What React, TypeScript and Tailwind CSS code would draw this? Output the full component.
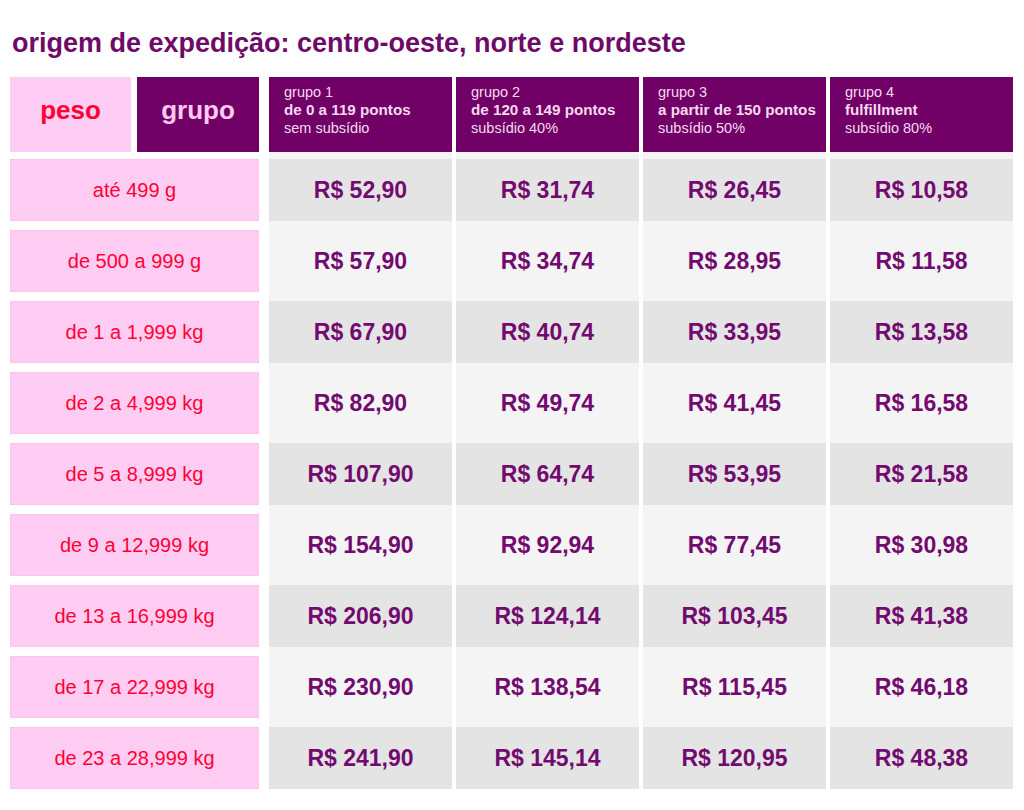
import React from "react";

const weights = [
  "até 499 g",
  "de 500 a 999 g",
  "de 1 a 1,999 kg",
  "de 2 a 4,999 kg",
  "de 5 a 8,999 kg",
  "de 9 a 12,999 kg",
  "de 13 a 16,999 kg",
  "de 17 a 22,999 kg",
  "de 23 a 28,999 kg",
];

const groups = [
  {
    title: "grupo 1",
    range: "de 0 a 119 pontos",
    sub: "sem subsídio",
    prices: ["52,90", "57,90", "67,90", "82,90", "107,90", "154,90", "206,90", "230,90", "241,90"],
  },
  {
    title: "grupo 2",
    range: "de 120 a 149 pontos",
    sub: "subsídio 40%",
    prices: ["31,74", "34,74", "40,74", "49,74", "64,74", "92,94", "124,14", "138,54", "145,14"],
  },
  {
    title: "grupo 3",
    range: "a partir de 150 pontos",
    sub: "subsídio 50%",
    prices: ["26,45", "28,95", "33,95", "41,45", "53,95", "77,45", "103,45", "115,45", "120,95"],
  },
  {
    title: "grupo 4",
    range: "fulfillment",
    sub: "subsídio 80%",
    prices: ["10,58", "11,58", "13,58", "16,58", "21,58", "30,98", "41,38", "46,18", "48,38"],
  },
];

export default function App() {
  return (
    <div
      className="w-[1024px] h-[810px] bg-white pt-[28px] pl-[10px]"
      style={{ fontFamily: '"Liberation Sans", Arial, Helvetica, sans-serif' }}
    >
      <h1 className="pl-[2px] text-[27px] leading-[31px] font-bold text-[#6e0a68]">
        origem de expedição: centro-oeste, norte e nordeste
      </h1>
      <div className="mt-[18px] flex">
        {/* left column */}
        <div className="w-[249px] flex flex-col">
          <div className="flex h-[75px] gap-[6px]">
            <div className="w-[121px] bg-[#ffcdf3] flex items-center justify-center pb-[9px] text-[26px] font-bold text-[#ff0033]">
              peso
            </div>
            <div className="w-[122px] bg-[#700066] flex items-center justify-center pb-[9px] text-[26px] font-bold text-[#ffc9f0]">
              grupo
            </div>
          </div>
          <div className="pt-[7px] flex flex-col gap-[9px]">
            {weights.map((w) => (
              <div
                key={w}
                className="h-[62px] bg-[#ffcdf3] border border-[#ffc4ee] flex items-center justify-center text-[20px] text-[#ff0033]"
              >
                {w}
              </div>
            ))}
          </div>
        </div>
        {/* price columns */}
        <div className="ml-[10px] flex gap-[4px]">
          {groups.map((g) => (
            <div key={g.title} className="w-[183px] flex flex-col">
              <div className="h-[75px] bg-[#700066] pt-[6px] pl-[15px] text-[14.5px] leading-[18px] text-[#f6daf0]">
                <div>{g.title}</div>
                <div className="font-bold text-[15.2px]">{g.range}</div>
                <div>{g.sub}</div>
              </div>
              <div className="bg-[#f4f4f4] pt-[7px] flex flex-col gap-[9px]">
                {g.prices.map((p, i) => (
                  <div
                    key={i}
                    className={
                      "h-[62px] flex items-center justify-center text-[23px] font-bold text-[#730a70] " +
                      (i % 2 === 0 ? "bg-[#e4e4e4]" : "bg-[#f4f4f4]")
                    }
                  >
                    R$ {p}
                  </div>
                ))}
              </div>
            </div>
          ))}
        </div>
      </div>
    </div>
  );
}
